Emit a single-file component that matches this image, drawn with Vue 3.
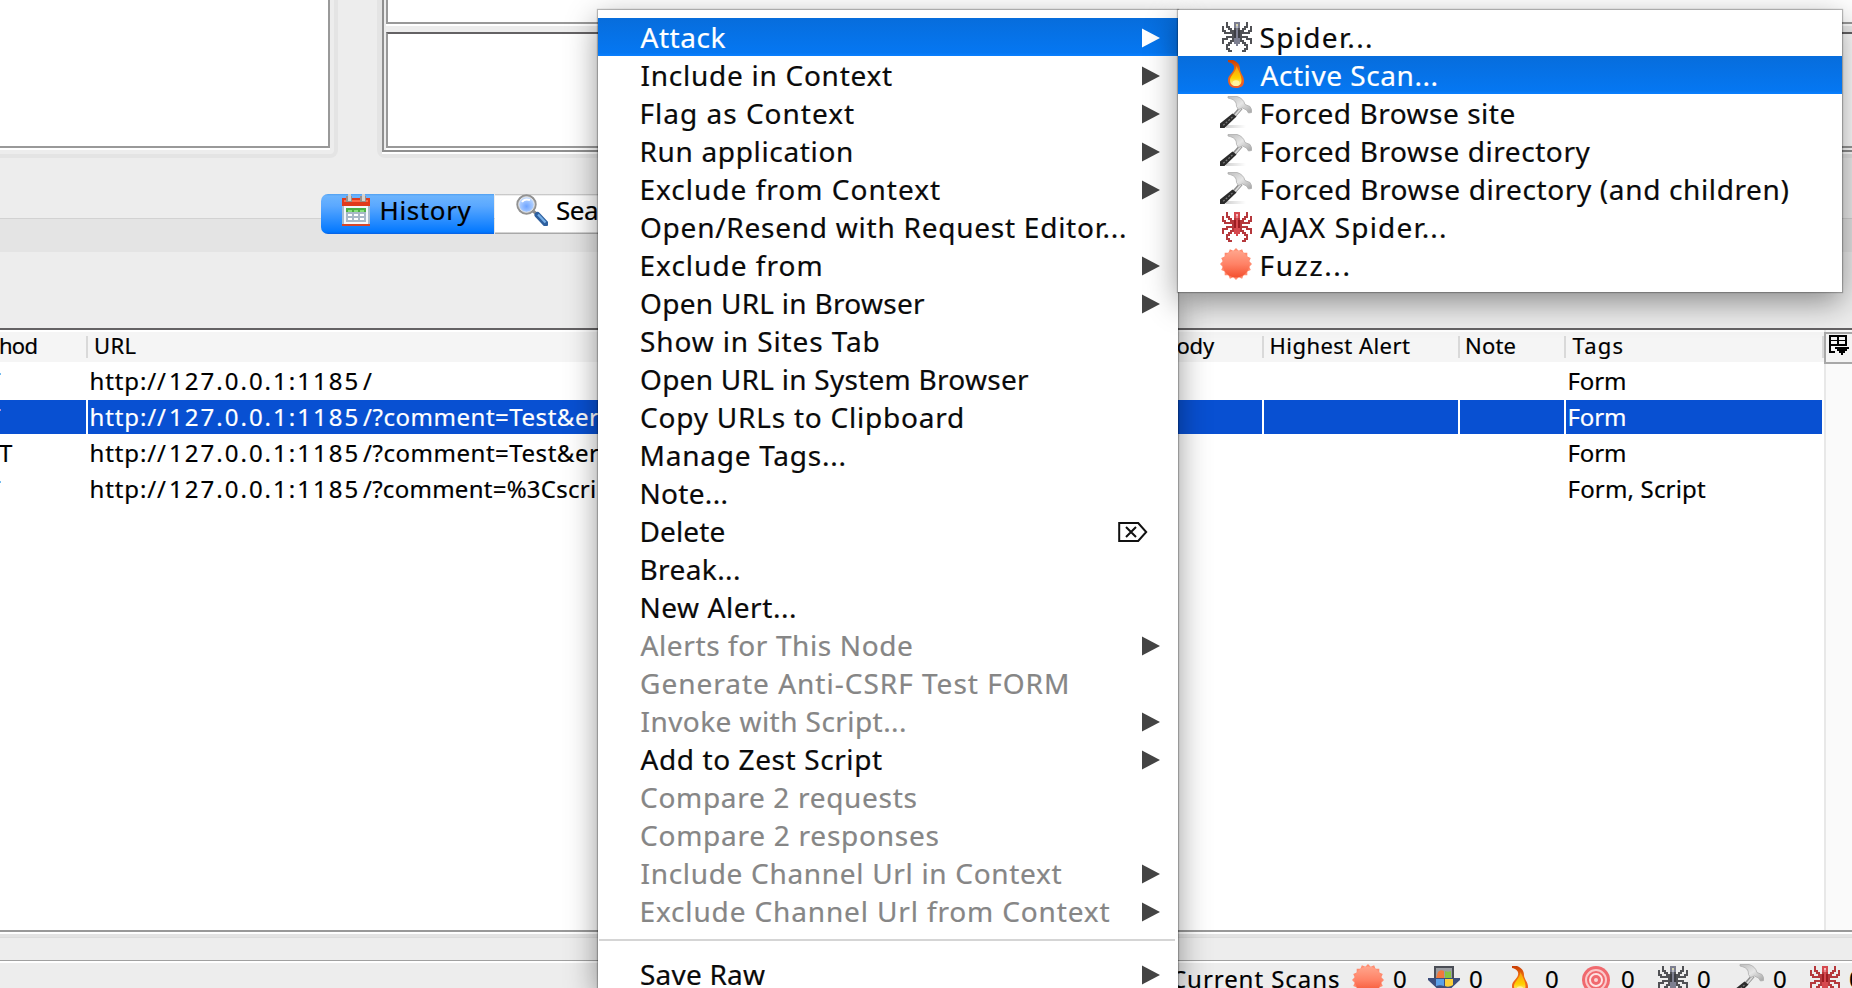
<script setup>
import { h } from 'vue'

const FAMILY = '"Noto Sans", "Open Sans", sans-serif'
const ctx = document.createElement('canvas').getContext('2d')

// Label whose glyphs span exactly `w` pixels, by adjusting the tracking
const Label = (props) => {
  const { text, size, w } = props
  ctx.font = `${size}px ${FAMILY}`
  const m = ctx.measureText(text)
  const ink = m.actualBoundingBoxLeft + m.actualBoundingBoxRight
  const n = text.length - 1
  const spacing = n > 0 ? (w - ink) / n : 0
  return h(
    'span',
    {
      style: {
        display: 'inline-block',
        flex: 'none',
        width: w + 'px',
        whiteSpace: 'pre',
        fontSize: size + 'px',
        letterSpacing: spacing.toFixed(3) + 'px',
        textIndent: m.actualBoundingBoxLeft.toFixed(2) + 'px'
      }
    },
    text
  )
}
Label.props = ['text', 'size', 'w']

const menu = [
  { t: 'Attack', l: 640.5, r: 725.5, sub: true, on: true },
  { t: 'Include in Context', l: 641.5, r: 892, sub: true },
  { t: 'Flag as Context', l: 641.5, r: 854, sub: true },
  { t: 'Run application', l: 641.5, r: 852, sub: true },
  { t: 'Exclude from Context', l: 641.5, r: 940, sub: true },
  { t: 'Open/Resend with Request Editor...', l: 641, r: 1125 },
  { t: 'Exclude from', l: 641.5, r: 820.5, sub: true },
  { t: 'Open URL in Browser', l: 641, r: 925, sub: true },
  { t: 'Show in Sites Tab', l: 641, r: 878.5 },
  { t: 'Open URL in System Browser', l: 641, r: 1029 },
  { t: 'Copy URLs to Clipboard', l: 641, r: 962 },
  { t: 'Manage Tags...', l: 641.5, r: 844.5 },
  { t: 'Note...', l: 641.5, r: 726.5 },
  { t: 'Delete', l: 641.5, r: 724.5, key: true },
  { t: 'Break...', l: 641.5, r: 739 },
  { t: 'New Alert...', l: 641.5, r: 795 },
  { t: 'Alerts for This Node', l: 640.5, r: 912, sub: true, off: true },
  { t: 'Generate Anti-CSRF Test FORM', l: 641, r: 1067, off: true },
  { t: 'Invoke with Script...', l: 641.5, r: 905, sub: true, off: true },
  { t: 'Add to Zest Script', l: 640.5, r: 882, sub: true },
  { t: 'Compare 2 requests', l: 641, r: 916.5, off: true },
  { t: 'Compare 2 responses', l: 641, r: 938.5, off: true },
  { t: 'Include Channel Url in Context', l: 641.5, r: 1061.5, sub: true, off: true },
  { t: 'Exclude Channel Url from Context', l: 641.5, r: 1109.5, sub: true, off: true },
  { sep: true },
  { t: 'Save Raw', l: 641, r: 765, sub: true }
]

const submenu = [
  { t: 'Spider...', icon: 'spider', l: 1260.5, r: 1371 },
  { t: 'Active Scan...', icon: 'flame', l: 1260.5, r: 1436.5, on: true },
  { t: 'Forced Browse site', icon: 'hammer', l: 1261.5, r: 1514.5 },
  { t: 'Forced Browse directory', icon: 'hammer', l: 1261.5, r: 1590.5 },
  { t: 'Forced Browse directory (and children)', icon: 'hammer', l: 1261.5, r: 1788.5 },
  { t: 'AJAX Spider...', icon: 'redspider', l: 1260.5, r: 1445 },
  { t: 'Fuzz...', icon: 'fuzz', l: 1261.5, r: 1348.5 }
]

const rows = [
  { m: 'GET', mw: 38, path: '/', pw: 8, tags: 'Form', tw: 55.5 },
  { m: 'GET', mw: 38, path: '/?comment=Test&er', pw: 236, tags: 'Form', tw: 55.5, on: true },
  { m: 'POST', mw: 58, path: '/?comment=Test&er', pw: 236, tags: 'Form', tw: 55.5, wide: true },
  { m: 'GET', mw: 38, path: '/?comment=%3Cscri', pw: 232, tags: 'Form, Script', tw: 136.5 }
]

const counters = ['fuzz', 'download', 'flame', 'target', 'spider', 'hammer', 'redspider']

const spiderMap = [
  '..#...ggg...#..',
  '..#...gyg...#..',
  '#.##..gwg..##.#',
  '#..##.#g#.##..#',
  '##..##dgd##..##',
  '.#####dgd#####.',
  '.....#dgd#.....',
  '..####dgd####..',
  '###..#ggg#..###',
  '#...##ggg##...#',
  '#..##.ggg.##..#',
  '..##...g...##..',
  '..#.........#..',
  '..##.......##..',
  '...##.....##...'
]
const cells = (pal) =>
  spiderMap.flatMap((row, y) =>
    [...row].map((c, x) => ({ x: 2 + x * 2, y: 2 + y * 2, f: pal[c] })).filter((c) => c.f)
  )
const greySpider = cells({ '#': '#505155', d: '#3d3e44', g: '#7d7f90', w: '#b9bbc4', y: '#d8d6b0' })
const redSpider = cells({ '#': '#b5383c', d: '#9d1c22', g: '#d6494f', w: '#e88a8e', y: '#f4c0c0' })

const ring = Array.from({ length: 32 }, (_, i) => {
  const a = (i * Math.PI) / 16
  const r = i % 2 ? 13.6 : 16
  return `${(16 + r * Math.sin(a)).toFixed(2)},${(16 - r * Math.cos(a)).toFixed(2)}`
}).join(' ')
</script>

<template>
  <div class="screen">
    <svg class="defs" width="0" height="0">
      <defs>
        <linearGradient id="gFuzz" x1="0" y1="0" x2="0" y2="1">
          <stop offset="0" stop-color="#ffa58c" />
          <stop offset=".5" stop-color="#ff8266" />
          <stop offset="1" stop-color="#f4502f" />
        </linearGradient>
        <linearGradient id="gFlame" x1="0" y1="0" x2="0" y2="1">
          <stop offset="0" stop-color="#c83c05" />
          <stop offset=".35" stop-color="#ee6d0c" />
          <stop offset="1" stop-color="#ee5a2a" />
        </linearGradient>
        <linearGradient id="gCore" x1="0" y1="0" x2="0" y2="1">
          <stop offset="0" stop-color="#f59a10" />
          <stop offset=".6" stop-color="#ffd000" />
          <stop offset="1" stop-color="#fff6b0" />
        </linearGradient>
        <linearGradient id="gHead" x1="0" y1="0" x2="1" y2="1">
          <stop offset="0" stop-color="#bcbcbc" />
          <stop offset=".5" stop-color="#e6e6e6" />
          <stop offset="1" stop-color="#a4a4a4" />
        </linearGradient>
        <linearGradient id="gShade" x1="0" y1="0" x2="1" y2="0">
          <stop offset="0" stop-color="#000" stop-opacity=".18" />
          <stop offset="1" stop-color="#000" stop-opacity="0" />
        </linearGradient>
        <radialGradient id="gLens" cx=".5" cy=".6" r=".6">
          <stop offset="0" stop-color="#6fa4ff" />
          <stop offset=".6" stop-color="#a9cbff" />
          <stop offset="1" stop-color="#dbe9ff" />
        </radialGradient>
      </defs>
      <symbol id="fuzz" viewBox="0 0 32 32">
        <polygon :points="ring" fill="#ff8b6f" />
        <circle cx="16" cy="16" r="13.500" fill="url(#gFuzz)" />
      </symbol>
      <symbol id="spider" viewBox="0 0 32 32">
        <rect v-for="(c, i) in greySpider" :key="i" :x="c.x" :y="c.y" width="2" height="2" :fill="c.f" />
      </symbol>
      <symbol id="redspider" viewBox="0 0 32 32">
        <rect v-for="(c, i) in redSpider" :key="i" :x="c.x" :y="c.y" width="2" height="2" :fill="c.f" />
      </symbol>
      <symbol id="flame" viewBox="0 0 32 32">
        <path d="M8 2h5c5 2 7 5 7 9 0 4 4 7 4 12 0 5-3 7-8 7s-8-3-8-8c0-5 5-7 6-11 1-4-2-6-6-7z" fill="url(#gFlame)" />
        <path d="M16.500 8c2 5 5 9 5 14 0 4-2 6-5.500 6s-6-2-6-6c0-4 6-8 6.500-14z" fill="url(#gCore)" />
        <ellipse cx="16" cy="25" rx="3.500" ry="2.800" fill="#fff3a0" />
      </symbol>
      <symbol id="hammer" viewBox="0 0 32 32">
        <rect x="6" y="29" width="20" height="3" fill="url(#gShade)" />
        <path d="M21 12L13 21" stroke="#8e8e8e" stroke-width="4" />
        <path d="M21 12.500L14 20.500" stroke="#dedede" stroke-width="1.600" />
        <path d="M12.500 17.500l4 3L4.500 32H0v-4.500z" fill="#2b2b2b" />
        <path d="M12.500 21L3 29.500" stroke="#777" stroke-width="1.300" stroke-dasharray="2 1.500" />
        <path d="M8 .5h9c4 1 7 4 8 8l5 2 1.500 3v3l-3 .5-2-3-4-2-4 1.500-2-3c0-5-2-7-8.500-8.500z" fill="url(#gHead)" stroke="#adadad" stroke-width=".8" />
      </symbol>
      <symbol id="target" viewBox="0 0 32 32">
        <circle cx="16" cy="16" r="14" fill="#f0696e" />
        <circle cx="16" cy="16" r="10" fill="none" stroke="#fbc9ca" stroke-width="2" />
        <circle cx="16" cy="16" r="6" fill="none" stroke="#fde3e3" stroke-width="2" />
        <circle cx="16" cy="16" r="2" fill="#fbd5d5" />
      </symbol>
      <symbol id="download" viewBox="0 0 32 32">
        <path d="M6 2h20v12h6v2L16 31 0 16v-2h6z" fill="#3c4e7c" />
        <path d="M6 2h20v12H6z" fill="#4a4d55" />
        <path d="M8 4h16v10H8z" fill="#9b9ea3" />
        <path d="M10 8c2-2 4-2 6-1v7H8z" fill="#f0783c" />
        <path d="M17 7c2 1 4 1 6 0v7h-6z" fill="#86c440" />
        <path d="M8 15h8v7c-3-1-5-1-8 0z" fill="#5aa0e8" />
        <path d="M17 15h8v6c-3 2-6 2-8 1z" fill="#fbd03c" />
      </symbol>
    </svg>

    <div class="top">
      <div class="left-frame"><div class="left-pane"></div></div>
      <div class="right-frame">
        <div class="right-inner">
          <div class="pane-a"></div>
          <div class="pane-b"></div>
        </div>
      </div>
    </div>

    <div class="tabs">
      <div class="tab active">
        <svg class="ico" viewBox="0 0 32 32" shape-rendering="crispEdges">
          <rect x="2" y="4" width="28" height="8" fill="#e03a1c" />
          <rect x="4" y="6" width="24" height="2" fill="#ff6a4a" />
          <rect x="2" y="12" width="28" height="18" fill="#a9bdd0" />
          <rect x="4" y="12" width="24" height="18" fill="#f3f7fb" />
          <rect x="6" y="14" width="20" height="4" fill="#4cae44" />
          <path d="M8 16h4v2h-4zM14 16h4v2h-4zM20 16h4v2h-4z" fill="#86e07a" />
          <rect x="6" y="18" width="20" height="10" fill="#a8b8c8" />
          <path d="M8 20h4v2h-4zM14 20h4v2h-4zM20 20h4v2h-4zM8 24h4v2h-4zM14 24h4v2h-4zM20 24h4v2h-4z" fill="#fff" />
          <rect x="2" y="30" width="28" height="2" fill="#d8452a" />
          <path d="M6 2h6v6h-6zM20 2h6v6h-6z" fill="#9a8f8a" />
          <path d="M8 0h3v7h-3zM22 0h3v7h-3z" fill="#d6d2ce" />
        </svg>
        <Label text="History" :size="26" :w="90" />
      </div>
      <div class="tab plain">
        <svg class="ico" viewBox="0 0 32 32">
          <path d="M17 17l5 4" stroke="#8c8c8c" stroke-width="3" />
          <path d="M21.500 21l8 8.500" stroke="#2d5f9e" stroke-width="6" stroke-linecap="round" />
          <path d="M22 20.500l7.500 8" stroke="#76aee6" stroke-width="2.200" />
          <circle cx="10.500" cy="10.500" r="9" fill="url(#gLens)" stroke="#929292" stroke-width="2.400" />
          <circle cx="10.500" cy="10.500" r="7.800" fill="none" stroke="#e8e8e8" stroke-width="1" />
          <path d="M6 8c2-3 5-3 8-2" stroke="#fff" stroke-width="2" fill="none" />
        </svg>
        <Label text="Search" :size="26" :w="77" />
      </div>
    </div>

    <div class="table">
      <div class="main">
        <div class="thead">
          <div class="c c1"><Label text="Method" :size="22" :w="74" /></div>
          <div class="c c2"><Label text="URL" :size="22" :w="40.500" /></div>
          <div class="c c3"><Label text="Size Resp. Body" :size="22" :w="158" /></div>
          <div class="c c4"><Label text="Highest Alert" :size="22" :w="138.500" /></div>
          <div class="c c5"><Label text="Note" :size="22" :w="48.500" /></div>
          <div class="c c6"><Label text="Tags" :size="22" :w="50" /></div>
        </div>
        <div v-for="(r, i) in rows" :key="i" class="tr" :class="{ on: r.on }">
          <div class="d c1" :class="{ wide: r.wide }"><Label :text="r.m" :size="24" :w="r.mw" /></div>
          <div class="d c2">
            <Label text="http://" :size="24" :w="74.500" />
            <Label class="host" text="127.0.0.1:1185" :size="24" :w="186.500" />
            <Label :text="r.path" :size="24" :w="r.pw" />
          </div>
          <div class="d c3"></div>
          <div class="d c4"></div>
          <div class="d c5"></div>
          <div class="d c6"><Label :text="r.tags" :size="24" :w="r.tw" /></div>
        </div>
      </div>
      <div class="gutter">
        <div class="colctl">
          <svg width="22" height="22" viewBox="0 0 22 22" shape-rendering="crispEdges">
            <path d="M0 0h18v2H0zM0 0h2v18H0zM0 16h6v2H0zM16 0h2v10h-2zM0 5h18v1H0zM0 9h18v2H0zM8 0h2v10H8z" fill="#000" />
            <path d="M6 12h14v2h-2v2h-2v2h-2v2h-2v-2h-2v-2H8v-2H6z" fill="#000" />
          </svg>
        </div>
      </div>
    </div>

    <div class="band"></div>
    <div class="status">
      <Label class="scans" text="Current Scans" :size="24" :w="167" />
      <div v-for="k in counters" :key="k" class="counter">
        <svg class="ico"><use :href="'#' + k" /></svg>
        <Label text="0" :size="24" :w="13" />
      </div>
    </div>

    <div class="menu">
      <template v-for="(m, i) in menu" :key="i">
        <div v-if="m.sep" class="sep"></div>
        <div v-else class="item" :class="{ on: m.on, off: m.off }">
          <span :style="{ width: m.l - 598 + 'px' }"></span>
          <Label :text="m.t" :size="28" :w="m.r - m.l" />
          <svg v-if="m.sub" class="arrow" viewBox="0 0 18 20"><path d="M0 0.500L18 10 0 19.500z" /></svg>
          <svg v-if="m.key" class="del" viewBox="0 0 30 20">
            <path d="M1.200 1h19l8 9-8 9h-19zM8 5l10 10M18 5L8 15" fill="none" stroke="#111" stroke-width="2" />
          </svg>
        </div>
      </template>
    </div>

    <div class="menu submenu">
      <div v-for="(m, i) in submenu" :key="i" class="item" :class="{ on: m.on }">
        <svg class="ico mico"><use :href="'#' + m.icon" /></svg>
        <span :style="{ width: m.l - 1252 + 'px' }"></span>
        <Label :text="m.t" :size="28" :w="m.r - m.l" />
      </div>
    </div>
  </div>
</template>

<style>
body {
  margin: 0;
  overflow: hidden;
}
</style>

<style scoped>
.screen {
  position: relative;
  width: 1852px;
  height: 988px;
  overflow: hidden;
  background: #ededed;
  color: #000;
  font-family: "Noto Sans", "Open Sans", sans-serif;
  -webkit-text-stroke: 0.2px currentColor;
  display: flex;
  flex-direction: column;
}
.defs { position: absolute; }
.ico { width: 32px; height: 32px; flex: none; display: block; }
.top { display: flex; height: 194px; flex: none; align-items: flex-start; }
.left-frame {
  box-sizing: border-box;
  width: 338px;
  height: 158px;
  border: solid #e4e4e4;
  border-width: 0 4px 4px 0;
  border-radius: 0 0 8px 0;
}
.left-pane {
  width: 328px;
  height: 146px;
  background: #fff;
  border: solid #999;
  border-width: 0 2px 2px 0;
  box-shadow: 0 2px 0 #fff;
}
.right-frame {
  box-sizing: border-box;
  flex: 1;
  margin-left: 39px;
  height: 158px;
  border: solid #e4e4e4;
  border-width: 0 0 4px 5px;
  border-radius: 0 0 0 8px;
}
.right-inner {
  height: 150px;
  border: solid #8f8f8f;
  border-width: 0 0 2px 2px;
  padding-left: 2px;
  box-shadow: 0 2px 0 #fff;
}
.pane-a {
  height: 22px;
  background: #fff;
  border: solid #999;
  border-width: 0 0 2px 2px;
  box-shadow: 0 2px 0 #fff;
}
.pane-b {
  height: 112px;
  margin-top: 8px;
  background: #fff;
  border: solid #999;
  border-width: 2px 0 2px 2px;
  border-top-color: #646264;
  box-shadow: 0 2px 0 #fff;
}
.tabs {
  display: flex;
  flex: none;
  height: 58px;
  padding-left: 321px;
  align-items: flex-start;
  background: linear-gradient(#ededed 24px, #d2d2d2 24px, #d2d2d2 25px, #e4e4e4 25px);
}
.tab { display: flex; height: 40px; box-sizing: border-box; line-height: 32px; }
.tab.active {
  width: 173px;
  padding-left: 19px;
  gap: 9.500px;
  border-radius: 7px 0 0 7px;
  background: linear-gradient(#4f9ff0 0, #6cb4fd 2px, #5aa8ff 12px, #0a7cff 36px, #0078ff 38px, #0a5fe0 40px);
}
.tab.plain {
  width: 200px;
  margin-left: 1px;
  padding-left: 21px;
  gap: 9px;
  background: linear-gradient(#b8b8b8 0, #fff 2px, #fff 38px, #a8a8a8 39px, #a8a8a8 40px);
}
.table {
  display: flex;
  flex: none;
  box-sizing: border-box;
  height: 604px;
  margin-top: 76px;
  border-top: 2px solid #646264;
  border-bottom: 2px solid #999;
  background: #fff;
}
.main { width: 1824px; }
.thead { display: flex; height: 30px; margin: 2px 0; background: #f5f5f5; line-height: 26px; font-size: 22px; }
.c, .d { box-sizing: border-box; flex: none; white-space: nowrap; display: flex; }
.c { background: linear-gradient(#d9d9d9, #d9d9d9) right 4px / 2px 22px no-repeat; }
.c1 { width: 88px; }
.c2 { width: 965px; }
.c.c2 { width: 965px; }
.c3 { width: 211px; }
.c4 { width: 196px; }
.c5 { width: 106px; }
.c6 { width: 258px; }
.c.c1 > span { margin-left: -37.500px; }
.c.c2 { padding-left: 7px; }
.c.c3 { padding-left: 4px; }
.c.c4 { padding-left: 7.500px; }
.c.c5 { padding-left: 7px; }
.c.c6 { padding-left: 6.500px; }
.tr { display: flex; height: 34px; margin-bottom: 2px; line-height: 33px; font-size: 24px; }
.d { border-right: 2px solid #fff; height: 34px; }
.tr.on { color: #fff; }
.tr.on .d { background: #0850d2; background-clip: padding-box; }
.d.c1 > span { margin-left: -37px; }
.d.c1.wide > span { margin-left: -45px; }
.d.c2 { padding-left: 3.500px; }
.host { margin: 0 5.500px 0 5px; }
.d.c6 { padding-left: 3.500px; }
.gutter { box-sizing: border-box; width: 28px; border-left: 2px solid #e8e8e8; background: #fafafa; padding-top: 2px; }
.colctl {
  box-sizing: border-box;
  height: 32px;
  margin-left: -2px;
  border: 2px solid #a8a8a8;
  border-right: 0;
  background: #f4f4f4;
  padding: 1px 0 0 3px;
}
.colctl svg { display: block; }
.band {
  flex: none;
  height: 31px;
  background: linear-gradient(#fff 2px, #e3e3e3 2px, #e3e3e3 5px, #dcdcdc 5px, #dcdcdc 6px, #ededed 6px, #ededed 28px, #a0a0a0 28px, #a0a0a0 29px, #fff 29px);
}
.status { display: flex; flex: none; box-sizing: border-box; height: 25px; padding: 1px 0 0 1172px; line-height: 29px; }
.scans { margin-right: 13px; }
.counter { display: flex; width: 76px; flex: none; gap: 10px; }
.menu {
  position: absolute;
  left: 598px;
  top: 10px;
  width: 580px;
  height: 978px;
  box-sizing: border-box;
  padding-top: 8px;
  background: #fff;
  box-shadow: 0 0 1px 1px rgba(0, 0, 0, .25), 0 10px 30px rgba(0, 0, 0, .42);
}
.submenu { left: 1178px; width: 664px; height: 282px; }
.item { display: flex; position: relative; height: 38px; line-height: 38px; color: #0a0a0a; }
.item > span { flex: none; }
.item.off { color: #868686; }
.item.on { color: #fff; background: linear-gradient(#076ddc, #0577f2 92%, #0a80ff); }
.arrow { width: 18px; height: 20px; margin: 10px 18px 0 auto; fill: #444; }
.on .arrow { fill: #fff; }
.del { width: 30px; height: 20px; margin: 10px 30px 0 auto; }
.sep { height: 2px; margin: 9px 3px 14px 1px; background: #d5d5d5; }
.mico { margin: 2px 0 0 42px; }
</style>
